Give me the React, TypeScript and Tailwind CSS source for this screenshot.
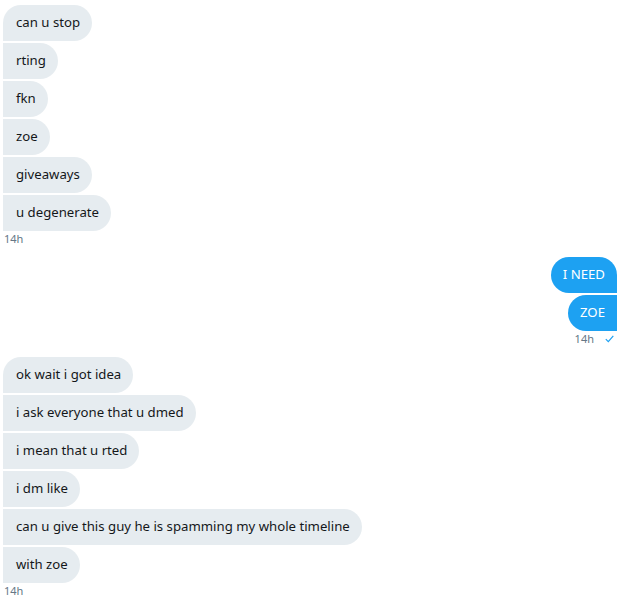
import React from "react";

type Msg = string;

function LeftGroup({ msgs }: { msgs: Msg[] }) {
  return (
    <div className="flex flex-col items-start">
      {msgs.map((m, i) => (
        <div
          key={i}
          className={`mb-[2px] h-[36px] flex items-center bg-[#e6ecf0] text-[#14171a] text-[13.2px] pl-[13px] pr-[12px] rounded-r-[18px] ${i === 0 ? "rounded-tl-[18px]" : ""}`}
        >
          <span className="whitespace-nowrap">{m}</span>
        </div>
      ))}
      <div className="text-[11px] leading-[12px] text-[#657786] pl-[1px]">14h</div>
    </div>
  );
}

function RightGroup({ msgs }: { msgs: Msg[] }) {
  return (
    <div className="flex flex-col items-end">
      {msgs.map((m, i) => (
        <div
          key={i}
          className={`mb-[2px] h-[36px] flex items-center bg-[#1da1f2] text-white text-[13.2px] pl-[12px] pr-[12px] rounded-l-[18px] ${i === 0 ? "rounded-tr-[18px]" : ""}`}
        >
          <span className="whitespace-nowrap">{m}</span>
        </div>
      ))}
      <div className="flex items-center gap-[11px] text-[11px] leading-[12px] text-[#657786] pr-[3px]">
        <span>14h</span>
        <svg width="9" height="8" viewBox="0 0 9 8" fill="none">
          <path d="M0.8 4.2 L3.3 6.7 L8.3 0.8" stroke="#1da1f2" strokeWidth="1.2" />
        </svg>
      </div>
    </div>
  );
}

export default function App() {
  return (
    <div
      className="w-[620px] h-[596px] bg-white px-[3px] pt-[5px] flex flex-col gap-[12px] overflow-hidden"
      style={{ fontFamily: '"Noto Sans", "Open Sans", sans-serif' }}
    >
      <LeftGroup msgs={["can u stop", "rting", "fkn", "zoe", "giveaways", "u degenerate"]} />
      <RightGroup msgs={["I NEED", "ZOE"]} />
      <LeftGroup
        msgs={[
          "ok wait i got idea",
          "i ask everyone that u dmed",
          "i mean that u rted",
          "i dm like",
          "can u give this guy he is spamming my whole timeline",
          "with zoe",
        ]}
      />
    </div>
  );
}
